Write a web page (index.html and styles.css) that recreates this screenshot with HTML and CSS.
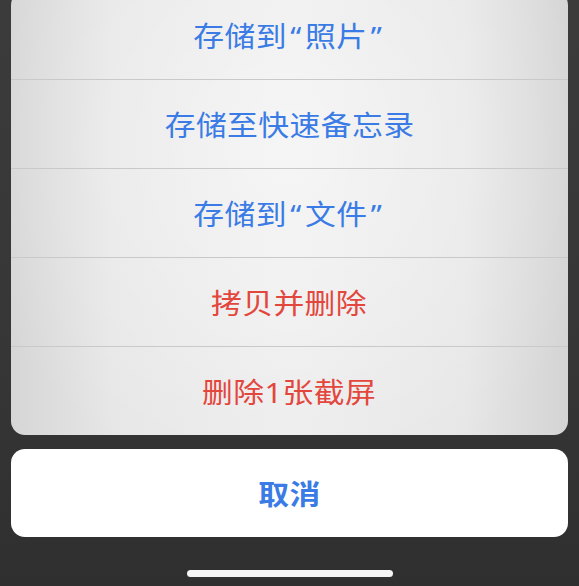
FILE: index.html
```html
<!DOCTYPE html>
<html>
<head>
    <link rel="stylesheet" href="styles.css">
</head>
<body>
    <div class="screen">
        <div class="sheet">
            <div class="action blue"><span class="label">存储到<span class="quote">“</span>照片<span class="quote">”</span></span></div>
            <div class="action blue"><span class="label">存储至快速备忘录</span></div>
            <div class="action blue"><span class="label">存储到<span class="quote">“</span>文件<span class="quote">”</span></span></div>
            <div class="action red"><span class="label">拷贝并删除</span></div>
            <div class="action red"><span class="label">删除1张截屏</span></div>
        </div>

        <div class="cancel"><span class="label">取消</span></div>

        <div class="home-bar"></div>
    </div>
</body>
</html>
```

FILE: styles.css
```css
body {
    margin: 0;
    font-family: "Noto Sans", "Noto Sans CJK SC", sans-serif;
    background-color: #333;
}

.screen {
    height: 586px;
    overflow: hidden;
    background: linear-gradient(to bottom, #3b3b3b 0%, #363636 60%, #2f2f2f 100%);
    padding: 0 11px;
    display: flex;
    flex-direction: column;
}

.sheet {
    margin-top: -9px;
    border-radius: 14px;
    overflow: hidden;
    background:
        radial-gradient(ellipse 60% 80% at 50% 35%, rgba(255,255,255,0.5) 0%, rgba(255,255,255,0) 100%),
        linear-gradient(to right, #d6d6d6 0%, #e6e6e6 18%, #ececec 50%, #e6e6e6 82%, #d4d4d4 100%);
}

.action {
    height: 88px;
    display: flex;
    align-items: center;
    justify-content: center;
    font-size: 28px;
    border-top: 1px solid #c9c9c9;
}

.action:first-child {
    border-top: none;
}

.label {
    display: inline-block;
    transform: scaleX(1.1);
    letter-spacing: 0.4px;
}

.quote {
    margin: 0 3px;
}

.blue {
    color: #3a7be5;
}

.red {
    color: #e3463d;
}

.cancel {
    margin-top: 14px;
    height: 88px;
    border-radius: 14px;
    background-color: #fff;
    color: #3a7be5;
    font-size: 28px;
    font-weight: bold;
    display: flex;
    align-items: center;
    justify-content: center;
}

.home-bar {
    width: 206px;
    height: 7px;
    margin: 33px auto 0;
    border-radius: 4px;
    background-color: #f4f4f4;
}
```
